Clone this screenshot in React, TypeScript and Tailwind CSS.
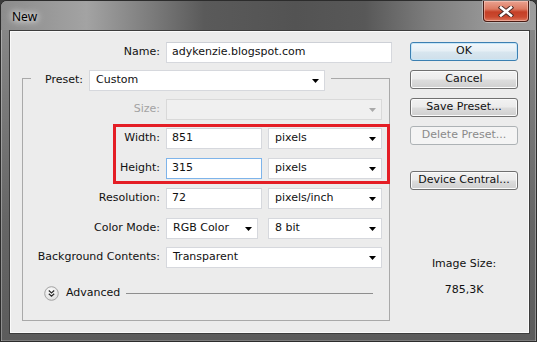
import type { ReactNode } from "react";

function Arrow({ disabled }: { disabled?: boolean }) {
  return (
    <svg width="7" height="4" viewBox="0 0 7 4" className="shrink-0">
      <path d="M0 0H7L3.5 4Z" fill={disabled ? "#a9a9a9" : "#000"} />
    </svg>
  );
}

function Select({ value, w, disabled }: { value: string; w: string; disabled?: boolean }) {
  return (
    <div
      className={`flex h-[21px] items-center justify-between border pl-[6px] pr-[5px] ${w} ${
        disabled ? "border-[#d9d9d9] bg-[#f0f0f0]" : "border-[#d6d8dd] bg-white"
      }`}
    >
      <span>{value}</span>
      <Arrow disabled={disabled} />
    </div>
  );
}

function Input({ value, w, focused }: { value: string; w: string; focused?: boolean }) {
  return (
    <div
      className={`flex h-[21px] items-center border bg-white pl-[5px] ${w} ${
        focused ? "border-[#7eb4ea]" : "border-[#d6d8dd] border-t-[#cdd0d6]"
      }`}
    >
      {value}
    </div>
  );
}

function Row({ label, lw, disabled, children, className = "" }: {
  label: string;
  lw: string;
  disabled?: boolean;
  children: ReactNode;
  className?: string;
}) {
  return (
    <div className={`flex h-[21px] items-center ${className}`}>
      <span className={`shrink-0 pr-[6px] text-right ${lw} ${disabled ? "text-[#a3a3a3]" : ""}`}>{label}</span>
      {children}
    </div>
  );
}

function Btn({ children, kind = "normal", className = "" }: {
  children: ReactNode;
  kind?: "normal" | "default" | "disabled";
  className?: string;
}) {
  const look =
    kind === "default"
      ? "border-[#3c7fb1] bg-[linear-gradient(180deg,#f1f7fb_0%,#e6eff5_48%,#d8e6ef_52%,#cfdfea_100%)] shadow-[inset_0_0_0_1px_#c6e6f8]"
      : kind === "disabled"
      ? "border-[#adb2b5] bg-[#f4f4f4] text-[#8a8a8a]"
      : "border-[#707070] bg-[linear-gradient(180deg,#f2f2f2_0%,#ebebeb_48%,#dddddd_52%,#cfcfcf_100%)] shadow-[inset_0_0_0_1px_#fbfbfb]";
  return (
    <div className={`flex h-[19px] items-center justify-center rounded-[3px] border ${look} ${className}`}>
      {children}
    </div>
  );
}

function CloseButton() {
  return (
    <div className="mr-[7px] flex h-[21px] w-[46px] items-center justify-center rounded-b-[4px] border border-t-0 border-[#4a1d15] bg-[linear-gradient(180deg,#eaa290_0%,#dc7a62_40%,#c53f26_55%,#cb4a30_80%,#de7a5f_100%)] shadow-[inset_0_0_0_1px_rgba(255,220,210,0.45),0_0_0_1px_rgba(255,255,255,0.35)]">
      <svg width="16" height="11" viewBox="0 0 16 11">
        <path d="M3 1.5L13 9.5M13 1.5L3 9.5" stroke="#4a2a25" strokeWidth="4.4" strokeLinecap="square" />
        <path d="M3 1.5L13 9.5M13 1.5L3 9.5" stroke="#fff" strokeWidth="2.6" strokeLinecap="square" />
      </svg>
    </div>
  );
}

function AdvancedIcon() {
  return (
    <svg width="15" height="15" viewBox="0 0 15 15" className="shrink-0">
      <defs>
        <radialGradient id="adv" cx="0.45" cy="0.35" r="0.7">
          <stop offset="0" stopColor="#ffffff" />
          <stop offset="1" stopColor="#dcdcdc" />
        </radialGradient>
      </defs>
      <circle cx="7.5" cy="7.5" r="6.8" fill="url(#adv)" stroke="#a2a2a2" />
      <path d="M4.8 4.6L7.5 7L10.2 4.6M4.8 7.8L7.5 10.2L10.2 7.8" fill="none" stroke="#2a2a2a" strokeWidth="1.3" />
    </svg>
  );
}

export default function App() {
  return (
    <div className="h-[342px] w-[537px] bg-[#3a3a3a] font-['DejaVu_Sans',sans-serif] text-[11px] text-[#111]">
      <div className="flex h-full flex-col rounded-t-[7px] border border-[#2c2c2c] bg-[linear-gradient(180deg,#8c8c8c_0%,#7a7a7a_30%,#666_65%,#5c5c5c_100%)] shadow-[inset_1px_0_0_rgba(255,255,255,0.3),inset_-1px_0_0_rgba(255,255,255,0.3),inset_0_-1px_0_rgba(255,255,255,0.2)]">
        {/* title bar */}
        <div className="flex h-[29px] shrink-0 items-start justify-between rounded-t-[6px] bg-[linear-gradient(90deg,#8c8c8c_0%,#a3a3a3_16%,#7c7c7c_28%,#5a5a5a_38%,#535353_55%,#585858_68%,#7d7d7d_80%,#999_92%,#9c9c9c_100%)]">
          <span className="pl-[11px] pt-[8px] font-['Noto_Sans',sans-serif] text-[12px] leading-[16px] text-black [text-shadow:0_0_6px_#fff,0_0_10px_#fff]">
            New
          </span>
          <CloseButton />
        </div>

        {/* frame + client area */}
        <div className="flex-1 pb-[7px] pl-[8px] pr-[6px]">
          <div className="flex h-full border border-[#3d3d3d] bg-[#ececec] shadow-[inset_0_0_0_1px_#fafafa]">
            {/* left column */}
            <div className="w-[382px] shrink-0 pt-[11px]">
              <Row label="Name:" lw="w-[156px]">
                <Input value="adykenzie.blogspot.com" w="w-[226px]" />
              </Row>

              <fieldset className="ml-[12px] mt-[3px] w-[368px] border border-[#a9a9a9] pb-[19px]">
                <legend className="ml-[8px] pl-[14px] pr-[6px] pt-[4px]">
                  <div className="flex items-center">
                    <span className="pr-[6px]">Preset:</span>
                    <Select value="Custom" w="w-[236px]" />
                  </div>
                </legend>

                <Row label="Size:" lw="w-[143px]" disabled className="mt-[8px]">
                  <Select value="" w="w-[216px]" disabled />
                </Row>

                {/* highlight box */}
                <div className="-mr-[1px] ml-[90px] mt-[4px] border-[3px] border-[#e41d25] pb-[2px]">
                  <Row label="Width:" lw="w-[50px]" className="mt-[1px]">
                    <Input value="851" w="w-[96px]" />
                    <div className="ml-[6px]">
                      <Select value="pixels" w="w-[114px]" />
                    </div>
                  </Row>
                  <Row label="Height:" lw="w-[50px]" className="mt-[9px]">
                    <Input value="315" w="w-[96px]" focused />
                    <div className="ml-[6px]">
                      <Select value="pixels" w="w-[114px]" />
                    </div>
                  </Row>
                </div>

                <Row label="Resolution:" lw="w-[143px]" className="mt-[4px]">
                  <Input value="72" w="w-[96px]" />
                  <div className="ml-[6px]">
                    <Select value="pixels/inch" w="w-[114px]" />
                  </div>
                </Row>
                <Row label="Color Mode:" lw="w-[143px]" className="mt-[9px]">
                  <Select value="RGB Color" w="w-[92px]" />
                  <div className="ml-[10px]">
                    <Select value="8 bit" w="w-[114px]" />
                  </div>
                </Row>
                <Row label="Background Contents:" lw="w-[143px]" className="mt-[8px]">
                  <Select value="Transparent" w="w-[216px]" />
                </Row>

                <div className="ml-[21px] mr-[16px] mt-[17px] flex h-[16px] items-center">
                  <AdvancedIcon />
                  <span className="ml-[7px]">Advanced</span>
                  <div className="ml-[6px] h-px flex-1 bg-[#8e8e8e]" />
                </div>
              </fieldset>
            </div>

            {/* right column */}
            <div className="ml-auto mr-[11px] flex w-[108px] flex-col pt-[11px]">
              <Btn kind="default">OK</Btn>
              <Btn className="mt-[9px]">Cancel</Btn>
              <Btn className="mt-[9px]">Save Preset...</Btn>
              <Btn kind="disabled" className="mt-[9px]">Delete Preset...</Btn>
              <Btn className="mt-[26px]">Device Central...</Btn>
              <div className="mt-[67px] text-center leading-[14px]">Image Size:</div>
              <div className="mt-[12px] text-center leading-[14px]">785,3K</div>
            </div>
          </div>
        </div>
      </div>
    </div>
  );
}
